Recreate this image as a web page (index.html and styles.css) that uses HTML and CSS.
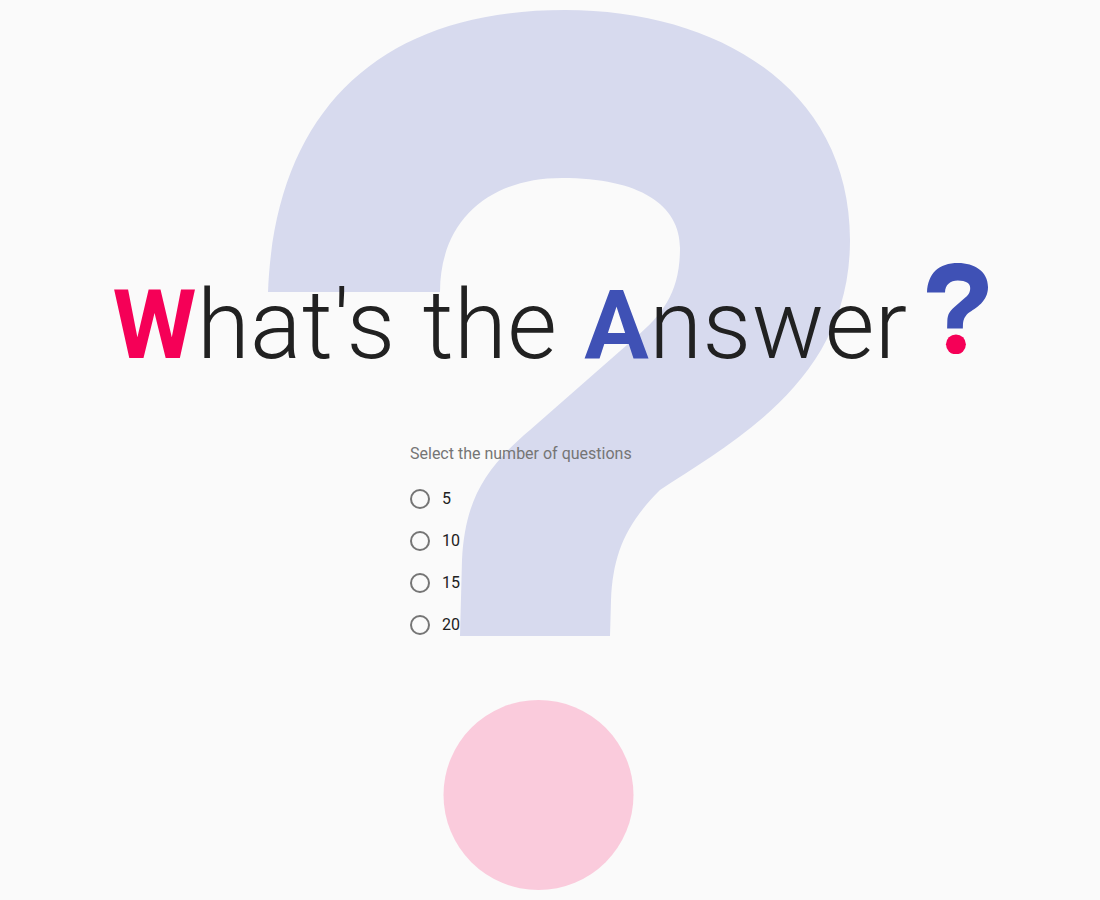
FILE: index.html
```html
<!DOCTYPE html>
<html lang="en">
<head>
<meta charset="utf-8">
<title>What's the Answer?</title>
<link rel="stylesheet" href="styles.css">
</head>
<body>
<svg class="bg-mark" viewBox="0 0 582 880" aria-hidden="true">
  <path class="bg-hook" d="M0 282 L172 282 C172 210 222 168 294 168 C372 168 412 195 412 238 C412 282 395 304 368 327 L262 420 C217 458 197 490 194 550 L192 626 L342 626 L343 590 C345 545 357 515 392 480 C467 430 582 370 582 230 C582 80 452 0 297 0 C112 0 7 100 0 282 Z"/>
  <circle class="bg-dot" cx="270.5" cy="785" r="95"/>
</svg>
<main class="page">
  <h1 class="title"><span class="accent-pink">W</span>hat's the <span class="accent-indigo">A</span>nswer<svg class="title-mark" viewBox="0 0 582 871" aria-hidden="true"><path class="title-hook" d="M0 282 L172 282 C172 210 222 168 294 168 C372 168 412 195 412 238 C412 282 395 304 368 327 L262 420 C217 458 197 490 194 550 L192 626 L342 626 L343 590 C345 545 357 515 392 480 C467 430 582 370 582 230 C582 80 452 0 297 0 C112 0 7 100 0 282 Z"/><circle class="title-dot" cx="276" cy="776" r="95"/></svg></h1>
  <form class="quiz-form">
    <p class="form-label">Select the number of questions</p>
    <div class="radio-group">
      <label class="radio-row"><input class="radio-input" type="radio" name="count" value="5"><span class="radio-text">5</span></label>
      <label class="radio-row"><input class="radio-input" type="radio" name="count" value="10"><span class="radio-text">10</span></label>
      <label class="radio-row"><input class="radio-input" type="radio" name="count" value="15"><span class="radio-text">15</span></label>
      <label class="radio-row"><input class="radio-input" type="radio" name="count" value="20"><span class="radio-text">20</span></label>
    </div>
  </form>
</main>
</body>
</html>
```

FILE: styles.css
```css
html, body {
  margin: 0;
  padding: 0;
  background: #fafafa;
  font-family: Roboto, "Liberation Sans", sans-serif;
  color: #212121;
}

body {
  position: relative;
  min-height: 900px;
  overflow: hidden;
}

.bg-mark {
  position: absolute;
  left: 50%;
  top: 10px;
  margin-left: -282px;
  width: 582px;
  height: 880px;
  z-index: 0;
}

.bg-hook {
  fill: #d7daee;
}

.bg-dot {
  fill: #facbdc;
}

.page {
  position: relative;
  z-index: 1;
  padding-top: 263px;
  display: flex;
  flex-direction: column;
  align-items: center;
}

.title {
  margin: 0;
  font-size: 96px;
  font-weight: 300;
  line-height: 1;
  letter-spacing: 0.5px;
  word-spacing: 3px;
  white-space: nowrap;
  color: #212121;
}

.accent-pink {
  color: #f50057;
  font-weight: 700;
}

.accent-indigo {
  color: #3f51b5;
  font-weight: 700;
}

.title-mark {
  display: inline-block;
  width: 61px;
  height: 91.3px;
  margin-left: 19px;
  vertical-align: 3.7px;
}

.title-hook {
  fill: #3f51b5;
}

.title-dot {
  fill: #f50057;
}

.quiz-form {
  width: 280px;
  margin: 69px 0 0;
}

.form-label {
  margin: 0;
  font-size: 16px;
  line-height: 24px;
  color: #757575;
}

.radio-group {
  margin-top: 12px;
  display: flex;
  flex-direction: column;
}

.radio-row {
  display: flex;
  align-items: center;
  gap: 12px;
  height: 42px;
  font-size: 16px;
  color: #212121;
  cursor: pointer;
}

.radio-input {
  appearance: none;
  -webkit-appearance: none;
  margin: 0;
  width: 20px;
  height: 20px;
  border: 2px solid #757575;
  border-radius: 50%;
  box-sizing: border-box;
  background: transparent;
  flex: none;
}

.radio-text {
  line-height: 24px;
}
```
